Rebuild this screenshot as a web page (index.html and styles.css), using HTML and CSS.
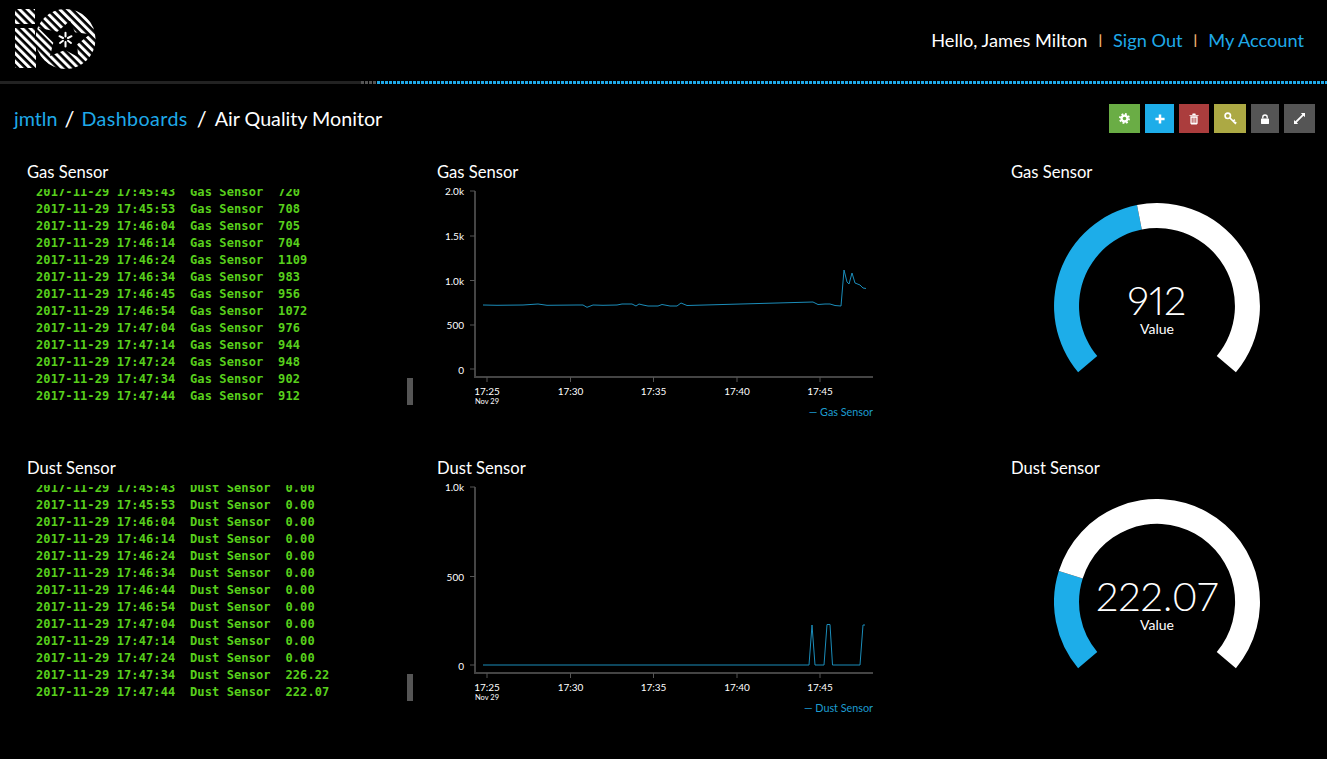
FILE: index.html
```html
<!DOCTYPE html>
<html lang="en">
<head>
<meta charset="utf-8">
<title>Air Quality Monitor</title>
<link rel="stylesheet" href="styles.css">
</head>
<body>
<header class="topbar">
  <svg class="logo" width="82" height="62" viewBox="14 8 82 62" aria-label="logo">
    <defs>
      <pattern id="stripes" width="5.7" height="5.7" patternUnits="userSpaceOnUse" patternTransform="rotate(-45)">
        <rect width="3" height="5.7" fill="#fff"/>
      </pattern>
    </defs>
    <path fill="url(#stripes)" d="M15 9h20v15H15z M15 28h20v12h1v28H15z"/>
    <circle cx="65.5" cy="39" r="30" fill="url(#stripes)"/>
    <path fill="#000" d="M70 20.700L75 32.300 90 34.300 77.300 44.300 78 57 65 50 50 56 53.300 42.700 38.300 27.700 57.300 31.700z"/>
    <g stroke="#fff" stroke-width="2" stroke-linecap="round">
      <path d="M65.500 36.500L65.500 32.800M68 38L71.500 36.200M68 40.800L71 43M65.500 42L65.500 46.500M63 40.800L60 43M63 38L59.500 36.200"/>
    </g>
  </svg>
  <nav class="usernav">
    <span class="hello">Hello, James Milton</span>
    <span class="pipe">|</span>
    <a class="link">Sign Out</a>
    <span class="pipe">|</span>
    <a class="link">My Account</a>
  </nav>
</header>
<div class="progress">
  <div class="seg seg-solid"></div>
  <div class="seg seg-gray"></div>
  <div class="seg seg-blue"></div>
</div>
<div class="toolbar">
  <div class="crumbs">
    <a class="link">jmtln</a><span class="slash">/</span><a class="link crumb-wide">Dashboards</a><span class="slash slash-last">/</span><span>Air Quality Monitor</span>
  </div>
  <div class="actions">
    <span class="btn btn-green w31"><svg width="11" height="11" viewBox="0 0 24 24"><circle cx="12" cy="12" r="9.500" fill="none" stroke="#fff" stroke-width="5" stroke-dasharray="3.700 3.760"/><circle cx="12" cy="12" r="6.500" fill="none" stroke="#fff" stroke-width="5"/></svg></span>
    <span class="btn btn-blue w29"><svg width="10" height="10" viewBox="0 0 24 24"><path fill="#fff" d="M9 1h6v8h8v6h-8v8H9v-8H1V9h8z"/></svg></span>
    <span class="btn btn-red w30"><svg width="10" height="12" viewBox="0 0 22 24"><path fill="#fff" d="M8 0h6l1 3h6v2H1V3h6zM3 6h16v16l-2 2H5l-2-2zm3 3v11h2V9zm4 0v11h2V9zm4 0v11h2V9z" fill-rule="evenodd"/></svg></span>
    <span class="btn btn-olive w32"><svg width="13" height="13" viewBox="0 0 24 24"><circle cx="7" cy="7" r="5" fill="none" stroke="#fff" stroke-width="3"/><path d="M11 11L22 22M17 17l3-3M20.500 20.500l2-2" fill="none" stroke="#fff" stroke-width="3"/></svg></span>
    <span class="btn btn-gray w28"><svg width="8" height="10" viewBox="0 0 18 22"><path fill="none" stroke="#fff" stroke-width="3" d="M4 10V7a5 5 0 0 1 10 0v3"/><rect y="10" width="18" height="12" rx="1" fill="#fff"/></svg></span>
    <span class="btn btn-gray w31"><svg width="11" height="11" viewBox="0 0 24 24"><path fill="#fff" d="M15 0h9v9l-3.200-3.200L6 20.800 9 24H0v-9l3 3.200L18 3z"/></svg></span>
  </div>
</div>
<main>
  <section class="row">
    <div class="log-col">
      <h2 class="title title-log">Gas Sensor</h2>
      <div class="log">
        <div class="line">2017-11-29 17:45:43  Gas Sensor  720</div>
        <div class="line">2017-11-29 17:45:53  Gas Sensor  708</div>
        <div class="line">2017-11-29 17:46:04  Gas Sensor  705</div>
        <div class="line">2017-11-29 17:46:14  Gas Sensor  704</div>
        <div class="line">2017-11-29 17:46:24  Gas Sensor  1109</div>
        <div class="line">2017-11-29 17:46:34  Gas Sensor  983</div>
        <div class="line">2017-11-29 17:46:45  Gas Sensor  956</div>
        <div class="line">2017-11-29 17:46:54  Gas Sensor  1072</div>
        <div class="line">2017-11-29 17:47:04  Gas Sensor  976</div>
        <div class="line">2017-11-29 17:47:14  Gas Sensor  944</div>
        <div class="line">2017-11-29 17:47:24  Gas Sensor  948</div>
        <div class="line">2017-11-29 17:47:34  Gas Sensor  902</div>
        <div class="line">2017-11-29 17:47:44  Gas Sensor  912</div>
        <div class="thumb"></div>
      </div>
    </div>
    <div class="chart-col">
      <h2 class="title">Gas Sensor</h2>
      <svg class="chart" width="450" height="235" viewBox="430 185 450 235">
        <path class="axis" d="M475 191V377H873"/>
        <path class="ticks" d="M470 191H475M470 236H475M470 280.500H475M470 325H475M470 369H475M487 377V382M570.500 377V382M653.500 377V382M737 377V382M820 377V382"/>
        <g class="ylabels">
          <text x="464" y="195">2.0k</text><text x="464" y="240">1.5k</text><text x="464" y="285">1.0k</text><text x="464" y="329">500</text><text x="464" y="373.500">0</text>
        </g>
        <g class="xlabels">
          <text x="487" y="395">17:25</text><text x="570.500" y="395">17:30</text><text x="653.500" y="395">17:35</text><text x="737" y="395">17:40</text><text x="820" y="395">17:45</text>
          <text class="date" x="487" y="404">Nov 29</text>
        </g>
        <text class="legend" x="873" y="416">— Gas Sensor</text>
        <path class="series" d="M483 305L497 305.300 523 305 538 304 547 305.300 577 305 583 305 587 307.300 593 305 603 305.300 617 305 622 304 632 304 636 306 639 304 643 305 648 306 658 306 662 304.500 670 306 677 306 681 303 687 305.500 813 302 818 304.500 825 304 830 304 835 305.500 841 306 844 270 847 282 849 284 852 273 855 283 860 285 863 288 866 288.500"/>
      </svg>
    </div>
    <div class="gauge-col">
      <h2 class="title">Gas Sensor</h2>
      <div class="gauge">
        <svg width="206" height="206" viewBox="0 0 206 206">
          <path class="arc-on" d="M24.100 169.200A103 103 0 0 1 83 2L87.800 26.500A78 78 0 0 0 43.250 153.100Z"/>
          <path class="arc-off" d="M83 2A103 103 0 0 1 181.900 169.200L162.750 153.100A78 78 0 0 0 87.800 26.500Z"/>
        </svg>
        <div class="readout"><div class="value">912</div><div class="caption">Value</div></div>
      </div>
    </div>
  </section>
  <section class="row">
    <div class="log-col">
      <h2 class="title title-log">Dust Sensor</h2>
      <div class="log">
        <div class="line">2017-11-29 17:45:43  Dust Sensor  0.00</div>
        <div class="line">2017-11-29 17:45:53  Dust Sensor  0.00</div>
        <div class="line">2017-11-29 17:46:04  Dust Sensor  0.00</div>
        <div class="line">2017-11-29 17:46:14  Dust Sensor  0.00</div>
        <div class="line">2017-11-29 17:46:24  Dust Sensor  0.00</div>
        <div class="line">2017-11-29 17:46:34  Dust Sensor  0.00</div>
        <div class="line">2017-11-29 17:46:44  Dust Sensor  0.00</div>
        <div class="line">2017-11-29 17:46:54  Dust Sensor  0.00</div>
        <div class="line">2017-11-29 17:47:04  Dust Sensor  0.00</div>
        <div class="line">2017-11-29 17:47:14  Dust Sensor  0.00</div>
        <div class="line">2017-11-29 17:47:24  Dust Sensor  0.00</div>
        <div class="line">2017-11-29 17:47:34  Dust Sensor  226.22</div>
        <div class="line">2017-11-29 17:47:44  Dust Sensor  222.07</div>
        <div class="thumb"></div>
      </div>
    </div>
    <div class="chart-col">
      <h2 class="title">Dust Sensor</h2>
      <svg class="chart" width="450" height="235" viewBox="430 481 450 235">
        <path class="axis" d="M475 487V673H873"/>
        <path class="ticks" d="M470 487H475M470 576.500H475M470 665H475M487 673V678M570.500 673V678M653.500 673V678M737 673V678M820 673V678"/>
        <g class="ylabels">
          <text x="464" y="491">1.0k</text><text x="464" y="581">500</text><text x="464" y="669.500">0</text>
        </g>
        <g class="xlabels">
          <text x="487" y="691">17:25</text><text x="570.500" y="691">17:30</text><text x="653.500" y="691">17:35</text><text x="737" y="691">17:40</text><text x="820" y="691">17:45</text>
          <text class="date" x="487" y="700">Nov 29</text>
        </g>
        <text class="legend" x="873" y="712">— Dust Sensor</text>
        <path class="series" d="M483 665L809 665 812 625 815 665 824 665 827 624.500 830 624.500 832.500 665 860 665 863 625 865 625"/>
      </svg>
    </div>
    <div class="gauge-col">
      <h2 class="title">Dust Sensor</h2>
      <div class="gauge">
        <svg width="206" height="206" viewBox="0 0 206 206">
          <path class="arc-on" d="M24.100 169.200A103 103 0 0 1 4.800 71.900L28.700 79.400A78 78 0 0 0 43.250 153.100Z"/>
          <path class="arc-off" d="M4.800 71.900A103 103 0 1 1 181.900 169.200L162.750 153.100A78 78 0 1 0 28.700 79.400Z"/>
        </svg>
        <div class="readout"><div class="value">222.07</div><div class="caption">Value</div></div>
      </div>
    </div>
  </section>
</main>
</body>
</html>
```
FILE: styles.css
```css
* { box-sizing: border-box; }
html, body { margin: 0; padding: 0; }
body {
  background: #000;
  color: #fff;
  font-family: "Lato", "Liberation Sans", sans-serif;
  overflow: hidden;
  height: 759px;
}
.topbar {
  height: 81px;
  display: flex;
  align-items: flex-start;
  justify-content: space-between;
  padding: 8px 23px 0 14px;
}
.logo { display: block; }
.usernav {
  display: flex;
  align-items: center;
  height: 63px;
  font-size: 18.200px;
}
.link { color: #1fa9e8; }
.pipe { color: #f0b070; font-size: 14px; font-weight: 700; margin: 0 11px; }
.progress { display: flex; height: 3px; }
.seg-solid { width: 361px; background: #222; }
.seg-gray { width: 16px; background: repeating-linear-gradient(90deg, #555 0 3px, #000 3px 4px); }
.seg-blue { flex: 1; background: repeating-linear-gradient(90deg, #1fa9e8 0 3px, #000 3px 4px); }
.toolbar {
  height: 76px;
  display: flex;
  justify-content: space-between;
  align-items: flex-start;
  padding: 20px 12px 0 14px;
}
.crumbs { font-size: 19.700px; line-height: 30px; display: flex; }
.crumb-wide { letter-spacing: 0.4px; }
.slash { margin: 0 7px; font-size: 22px; }
.slash-last { margin: 0 8px 0 9px; }
.actions { display: flex; gap: 5px; }
.btn { height: 29px; display: flex; align-items: center; justify-content: center; }
.w28 { width: 28px; } .w29 { width: 29px; } .w30 { width: 30px; } .w31 { width: 31px; } .w32 { width: 32px; }
.btn-green { background: #6aad45; }
.btn-blue { background: #1dade9; }
.btn-red { background: #ab3d3d; }
.btn-olive { background: #aca944; }
.btn-gray { background: #555; }
.row {
  height: 296px;
  display: grid;
  grid-template-columns: 430px 574px 1fr;
}
.title {
  margin: 0;
  font-size: 16.600px;
  font-weight: 400;
  line-height: 24px;
  height: 25px;
  padding-left: 7px;
}
.title-log { padding-left: 27px; height: 29px; }
.log {
  position: relative;
  width: 413px;
  height: 216px;
  overflow: hidden;
  display: flex;
  flex-direction: column;
  justify-content: flex-end;
  padding-left: 36px;
  font-family: "DejaVu Sans Mono", "Liberation Mono", monospace;
  font-weight: 700;
  font-size: 12px;
  letter-spacing: 0.11px;
  color: #58d01c;
}
.line { height: 17px; line-height: 17px; white-space: pre; flex: none; }
.thumb {
  position: absolute;
  right: 0;
  bottom: 0;
  width: 6px;
  height: 27px;
  background: #555;
}
.chart { display: block; }
.axis { fill: none; stroke: #444; stroke-width: 2; }
.ticks { fill: none; stroke: #555; stroke-width: 1; }
.series { fill: none; stroke: #1b8dba; stroke-width: 1; }
.ylabels text, .xlabels text { fill: #fff; font-size: 10px; }
.ylabels text { text-anchor: end; }
.xlabels text { text-anchor: middle; }
.xlabels .date { font-size: 7.500px; }
.legend { fill: #1d9ccf; font-size: 10.800px; text-anchor: end; }
.gauge-col { display: flex; flex-direction: column; }
.gauge { position: relative; width: 206px; height: 206px; margin: 18px 0 0 50px; }
.gauge svg { display: block; }
.arc-on { fill: #1dade9; }
.arc-off { fill: #fff; }
.readout {
  position: absolute;
  left: 0;
  right: 0;
  top: 73px;
  text-align: center;
}
.value {
  font-size: 40px;
  font-weight: 300;
  line-height: 48px;
  font-variant-numeric: proportional-nums;
}
.caption { font-size: 14px; line-height: 18px; margin-top: -4px; }
```
